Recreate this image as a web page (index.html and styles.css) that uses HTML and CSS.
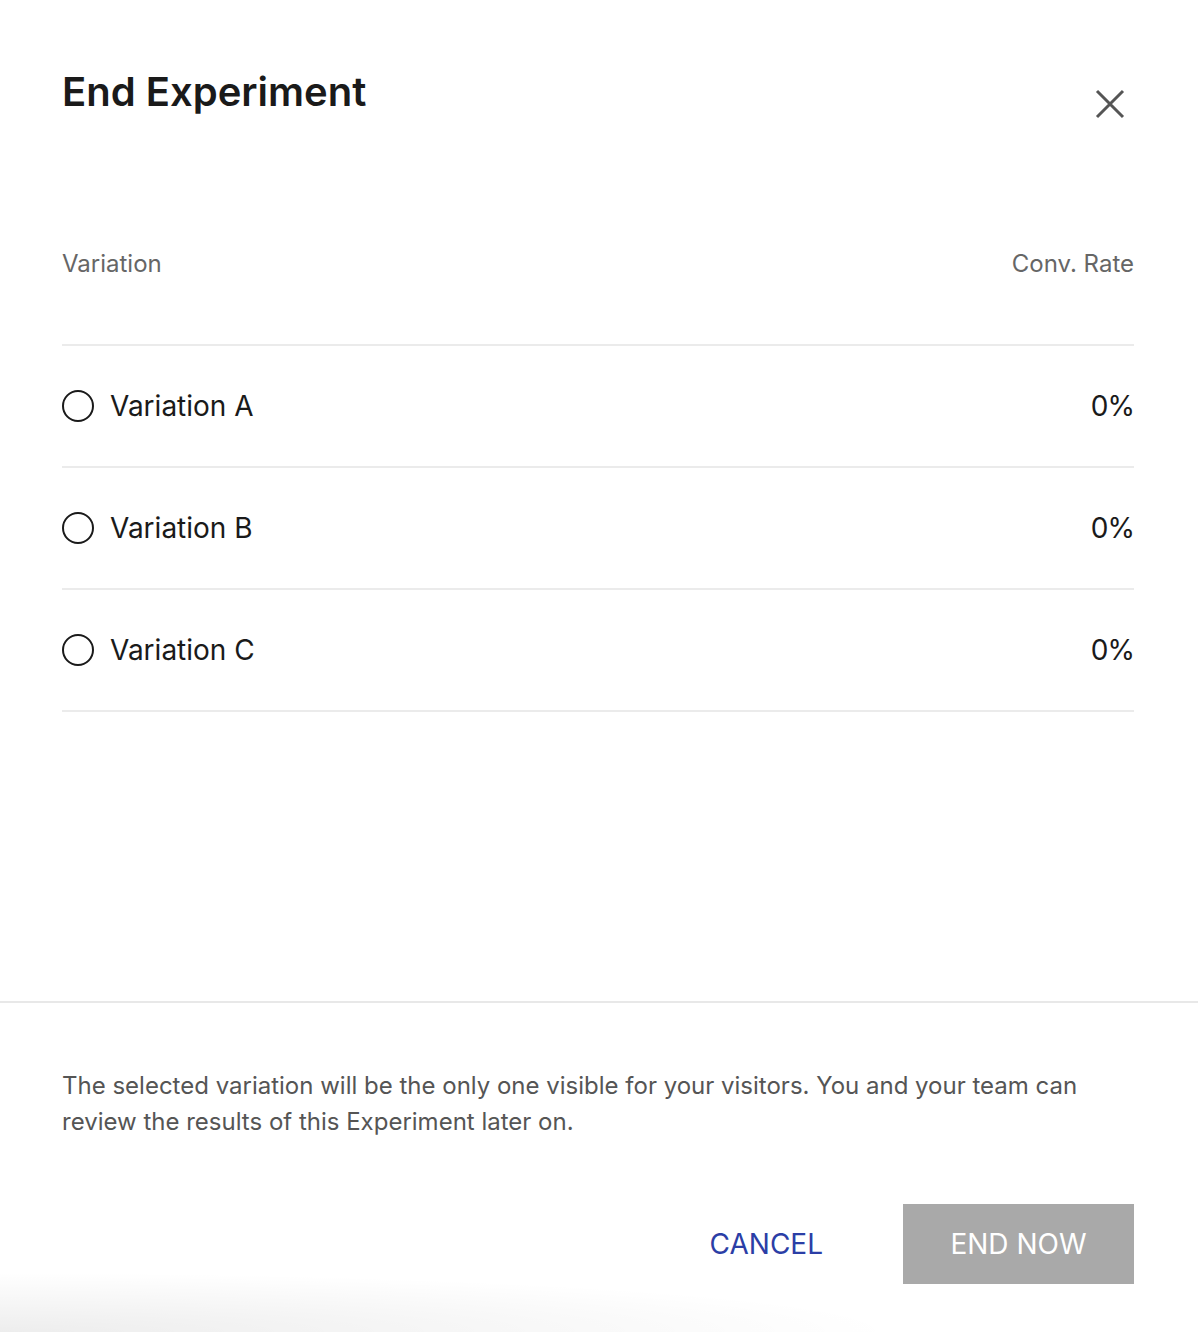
FILE: index.html
```html
<!DOCTYPE html>
<html lang="en">
<head>
<meta charset="utf-8">
<title>End Experiment</title>
<link rel="stylesheet" href="styles.css">
</head>
<body>
<div class="modal">
  <div class="main">
    <header class="head">
      <h1 class="title">End Experiment</h1>
      <button class="close" aria-label="Close">
        <svg width="32" height="32" viewBox="0 0 32 32"><path d="M3 3 L29 29 M29 3 L3 29" stroke="#555" stroke-width="3" fill="none"/></svg>
      </button>
    </header>
    <div class="table">
      <div class="thead">
        <span>Variation</span>
        <span>Conv. Rate</span>
      </div>
      <label class="row">
        <span class="name"><span class="radio"></span>Variation A</span>
        <span class="rate">0%</span>
      </label>
      <label class="row">
        <span class="name"><span class="radio"></span>Variation B</span>
        <span class="rate">0%</span>
      </label>
      <label class="row">
        <span class="name"><span class="radio"></span>Variation C</span>
        <span class="rate">0%</span>
      </label>
    </div>
  </div>
  <div class="foot">
    <p class="note">The selected variation will be the only one visible for your visitors. You and your team can review the results of this Experiment later on.</p>
    <div class="actions">
      <button class="cancel">CANCEL</button>
      <button class="end">END NOW</button>
    </div>
  </div>
  <div class="shade"></div>
</div>
</body>
</html>
```
FILE: styles.css
```css
* { box-sizing: border-box; }
html, body { margin: 0; padding: 0; background: #fff; }
body { font-family: Inter, "Noto Sans", sans-serif; color: #1a1a1a; }
.modal { position: relative; width: 1198px; height: 1332px; overflow: hidden; }
.main { padding: 0 64px 0 62px; height: 1001px; }
.head { display: flex; justify-content: space-between; align-items: flex-start; padding-top: 66px; }
.title { margin: 0; font-size: 40px; font-weight: 600; line-height: 52px; letter-spacing: 0; color: #1a1a1a; }
.close { border: 0; background: none; padding: 0; margin: 22px 8px 0 0; width: 32px; height: 32px; cursor: pointer; }
.close svg { display: block; }
.table { margin-top: 129px; }
.thead { display: flex; justify-content: space-between; font-size: 24px; color: #666; line-height: 30px; height: 97px; border-bottom: 2px solid #ebebeb; }
.row { display: flex; justify-content: space-between; align-items: center; height: 122px; border-bottom: 2px solid #ebebeb; font-size: 28px; color: #1a1a1a; }
.name { display: flex; align-items: center; }
.radio { width: 32px; height: 32px; border: 2px solid #1a1a1a; border-radius: 50%; margin-right: 16px; flex: none; }
.rate { letter-spacing: -1px; }
.foot { border-top: 2px solid #e8e8e8; padding: 65px 64px 0 62px; }
.note { margin: 0; font-size: 24px; line-height: 36px; color: #555; }
.actions { display: flex; justify-content: flex-end; align-items: center; margin-top: 64px; gap: 80px; }
.cancel { border: 0; background: none; font-family: Inter, sans-serif; font-size: 28px; color: #2b3ea6; padding: 0; cursor: pointer; }
.end { border: 0; background: #a9a9a9; color: #fff; font-family: Inter, sans-serif; font-size: 28px; width: 231px; height: 80px; padding: 0; cursor: pointer; }
.shade { position: absolute; left: 0; bottom: 0; width: 1000px; height: 60px; background: radial-gradient(ellipse 900px 60px at 0 100%, rgba(0,0,0,0.07), rgba(0,0,0,0) 100%); pointer-events: none; }
```
